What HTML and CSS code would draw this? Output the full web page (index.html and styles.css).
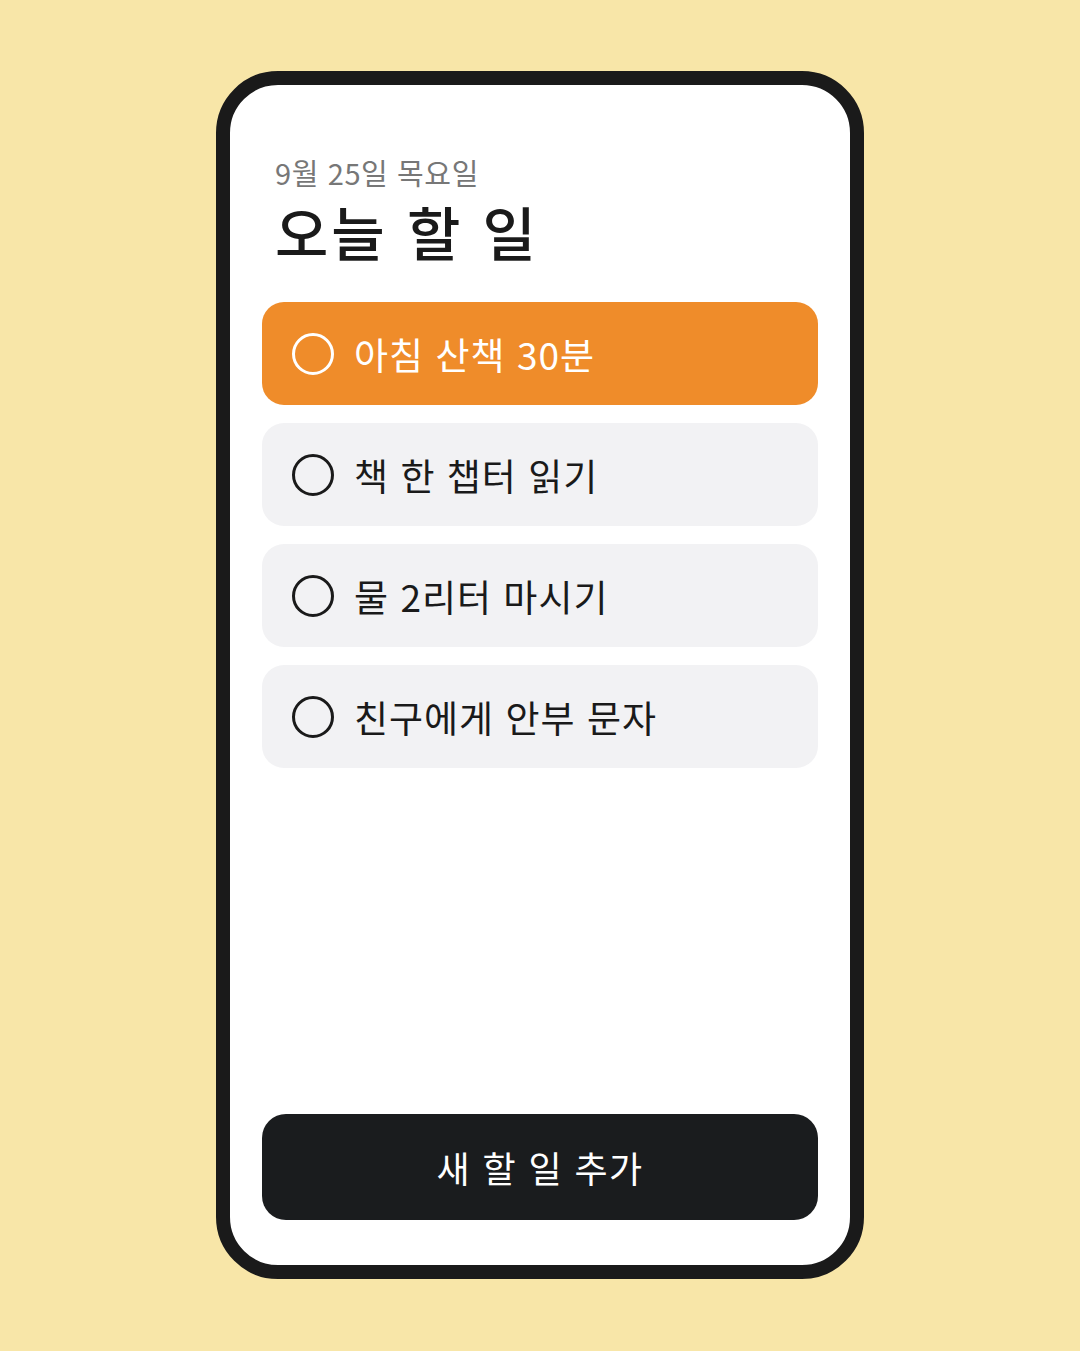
FILE: index.html
```html
<!DOCTYPE html>
<html lang="ko">
<head>
  <meta charset="UTF-8">
  <meta name="viewport" content="width=device-width, initial-scale=1.0">
  <link rel="stylesheet" href="styles.css">
  <title>오늘 할 일</title>
</head>
<body>
  <div class="phone">
    <div class="screen">
      <!-- Header -->
      <div class="header">
        <div class="date">9월 25일 목요일</div>
        <h1 class="title">오늘 할 일</h1>
      </div>

      <!-- Todo List -->
      <ul class="todo-list">
        <li class="todo active">
          <span class="check"></span>
          <span class="label">아침 산책 30분</span>
        </li>
        <li class="todo">
          <span class="check"></span>
          <span class="label">책 한 챕터 읽기</span>
        </li>
        <li class="todo">
          <span class="check"></span>
          <span class="label">물 2리터 마시기</span>
        </li>
        <li class="todo">
          <span class="check"></span>
          <span class="label">친구에게 안부 문자</span>
        </li>
      </ul>

      <button class="add-btn">새 할 일 추가</button>
    </div>
  </div>
</body>
</html>
```

FILE: styles.css
```css
/* General Styles */
body {
  margin: 0;
  background: #f8e6a8;
  font-family: "Noto Sans CJK KR", "Noto Sans", sans-serif;
}

.phone {
  box-sizing: border-box;
  width: 648px;
  height: 1208px;
  margin: 71px auto 0;
  border: 14px solid #1a1a1a;
  border-radius: 62px;
  background: #fff;
  overflow: hidden;
}

.screen {
  box-sizing: border-box;
  height: 100%;
  display: flex;
  flex-direction: column;
  padding: 0 32px 45px;
}

/* Header */
.header {
  padding: 70px 13px 0;
}

.date {
  font-size: 29px;
  line-height: 34px;
  letter-spacing: 0.6px;
  color: #777;
}

.title {
  margin: 9px 0 0;
  font-size: 58px;
  line-height: 66px;
  font-weight: 500;
  letter-spacing: 3px;
  color: #1a1a1a;
}

/* Todo List */
.todo-list {
  list-style: none;
  margin: 38px 0 0;
  padding: 0;
  display: flex;
  flex-direction: column;
  gap: 18px;
}

.todo {
  height: 103px;
  display: flex;
  align-items: center;
  gap: 20px;
  padding: 0 30px;
  border-radius: 22px;
  background: #f2f2f4;
  color: #1a1a1a;
}

.todo.active {
  background: #ef8c2a;
  color: #fff;
}

.check {
  box-sizing: border-box;
  width: 42px;
  height: 42px;
  border: 3.5px solid currentColor;
  border-radius: 50%;
  flex-shrink: 0;
}

.label {
  font-size: 37px;
  letter-spacing: 1px;
}

/* Button */
.add-btn {
  margin-top: auto;
  height: 106px;
  border: none;
  border-radius: 24px;
  background: #1a1c1e;
  color: #fff;
  font-family: inherit;
  font-size: 36px;
  letter-spacing: 1.4px;
}
```
